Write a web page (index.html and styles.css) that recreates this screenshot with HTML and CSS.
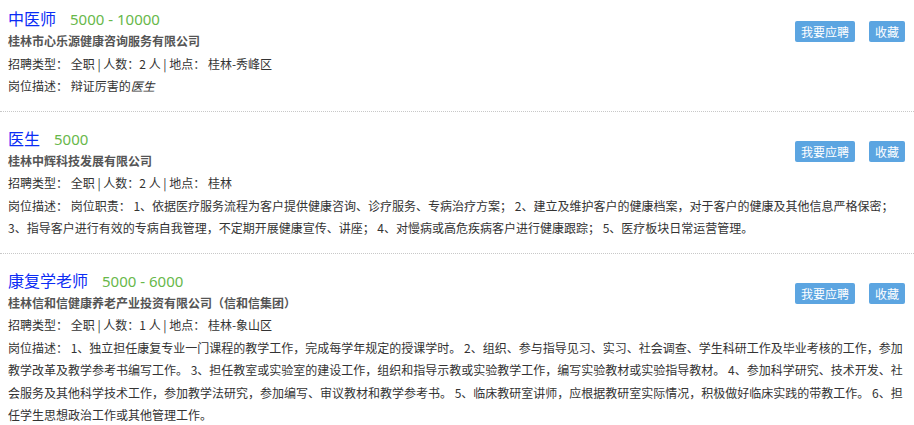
FILE: index.html
```html
<!DOCTYPE html>
<html lang="zh-CN">
<head>
<meta charset="utf-8">
<title>职位列表</title>
<link rel="stylesheet" href="styles.css">
</head>
<body>
<div class="job-list">
  <div class="job first">
    <div class="job-title"><a class="name">中医师</a><span class="salary">5000 - 10000</span></div>
    <div class="actions"><span class="btn">我要应聘</span><span class="btn">收藏</span></div>
    <div class="company">桂林市心乐源健康咨询服务有限公司</div>
    <div class="meta">招聘类型： 全职 | 人数：2 人 | 地点： 桂林-秀峰区</div>
    <div class="desc">岗位描述： 辩证厉害的<em>医生</em></div>
  </div>
  <div class="job">
    <div class="job-title"><a class="name">医生</a><span class="salary">5000</span></div>
    <div class="actions"><span class="btn">我要应聘</span><span class="btn">收藏</span></div>
    <div class="company">桂林中辉科技发展有限公司</div>
    <div class="meta">招聘类型： 全职 | 人数：2 人 | 地点： 桂林</div>
    <div class="desc">岗位描述： 岗位职责： 1、依据医疗服务流程为客户提供健康咨询、诊疗服务、专病治疗方案； 2、建立及维护客户的健康档案，对于客户的健康及其他信息严格保密； 3、指导客户进行有效的专病自我管理，不定期开展健康宣传、讲座； 4、对慢病或高危疾病客户进行健康跟踪； 5、医疗板块日常运营管理。</div>
  </div>
  <div class="job">
    <div class="job-title"><a class="name">康复学老师</a><span class="salary">5000 - 6000</span></div>
    <div class="actions"><span class="btn">我要应聘</span><span class="btn">收藏</span></div>
    <div class="company">桂林信和信健康养老产业投资有限公司（信和信集团）</div>
    <div class="meta">招聘类型： 全职 | 人数：1 人 | 地点： 桂林-象山区</div>
    <div class="desc">岗位描述： 1、独立担任康复专业一门课程的教学工作，完成每学年规定的授课学时。 2、组织、参与指导见习、实习、社会调查、学生科研工作及毕业考核的工作，参加教学改革及教学参考书编写工作。 3、担任教室或实验室的建设工作，组织和指导示教或实验教学工作，编写实验教材或实验指导教材。 4、参加科学研究、技术开发、社会服务及其他科学技术工作，参加教学法研究，参加编写、审议教材和教学参考书。 5、临床教研室讲师，应根据教研室实际情况，积极做好临床实践的带教工作。 6、担任学生思想政治工作或其他管理工作。</div>
  </div>
</div>
</body>
</html>
```

FILE: styles.css
```css
* { box-sizing: border-box; }
html, body {
  margin: 0;
  padding: 0;
  background: #fff;
}
body {
  font-family: "Noto Sans CJK SC", "Noto Sans", sans-serif;
  font-size: 12px;
  color: #333;
}
.job-list {
  display: flex;
  flex-direction: column;
}
.job {
  display: grid;
  grid-template-columns: 1fr auto;
  grid-template-rows: 24px auto auto auto;
  padding: 14px 8px 13px 8px;
  border-bottom: 1px dotted #c8c8c8;
}
.job.first { padding-top: 6px; }
.job-title {
  grid-column: 1;
  grid-row: 1;
  height: 24px;
  line-height: 24px;
  white-space: nowrap;
}
.name {
  font-size: 16px;
  line-height: 24px;
  color: #0a2cf5;
  text-decoration: none;
}
.salary {
  margin-left: 14px;
  font-size: 15px;
  line-height: 24px;
  color: #67b84a;
  font-family: "Noto Sans", "Noto Sans CJK SC", sans-serif;
}
.actions {
  grid-column: 2;
  grid-row: 1 / span 3;
  display: flex;
  gap: 14px;
  align-items: flex-start;
  padding-top: 15px;
  padding-right: 1px;
}
.btn {
  display: block;
  height: 21px;
  line-height: 21px;
  padding: 0 6px;
  background: #5ca5e1;
  color: #fff;
  border-radius: 2px;
  font-size: 12px;
}
.company {
  grid-column: 1;
  grid-row: 2;
  font-weight: bold;
  color: #555;
  line-height: 22.5px;
}
.meta {
  grid-column: 1;
  grid-row: 3;
  line-height: 22.5px;
}
.desc {
  grid-column: 1 / span 2;
  grid-row: 4;
  line-height: 22.5px;
}
.desc em { font-style: italic; }
```
